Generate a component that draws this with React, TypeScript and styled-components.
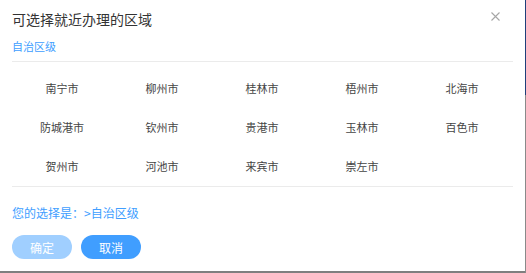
import React from "react";
import styled, { createGlobalStyle } from "styled-components";

const Global = createGlobalStyle`
  html, body { margin: 0; padding: 0; }
  body {
    background: #7f7f7f;
    font-family: "Noto Sans CJK SC", "Noto Sans", sans-serif;
    width: 526px;
    height: 273px;
    overflow: hidden;
  }
`;

const Page = styled.div`
  display: flex;
  width: 526px;
  height: 273px;
`;

const Dialog = styled.div`
  width: 525px;
  height: 271px;
  background: #fff;
  box-sizing: border-box;
  padding: 0 12px;
  display: flex;
  flex-direction: column;
`;

const SideStrip = styled.div`
  width: 1px;
  height: 273px;
  background: linear-gradient(#1f3f7a 0, #1f3f7a 95px, #8a8a8a 95px, #8a8a8a 100%);
`;

const Header = styled.div`
  display: flex;
  align-items: center;
  justify-content: space-between;
  height: 36px;
`;

const Title = styled.div`
  font-size: 14px;
  line-height: 16px;
  color: #333;
  margin-top: 2px;
`;

const Close = styled.button`
  border: 0;
  background: none;
  padding: 0;
  margin-right: 12px;
  margin-bottom: 3px;
  width: 12px;
  height: 12px;
  display: flex;
  align-items: center;
  justify-content: center;
  cursor: pointer;
`;

const Level = styled.div`
  font-size: 11px;
  line-height: 20px;
  height: 20px;
  color: #409eff;
  display: flex;
  align-items: center;
  margin-bottom: 5px;
`;

const Divider = styled.div`
  height: 1px;
  background: #ebebeb;
`;

const Grid = styled.div`
  display: grid;
  grid-template-columns: repeat(5, 100px);
  grid-auto-rows: 39px;
  padding-top: 6px;
  height: 124px;
  box-sizing: border-box;
  width: 500px;
`;

const City = styled.div`
  font-size: 11px;
  color: #444;
  display: flex;
  align-items: center;
  justify-content: center;
  cursor: pointer;
`;

const Selection = styled.div`
  font-size: 12px;
  color: #409eff;
  height: 48px;
  box-sizing: border-box;
  padding-top: 2px;
  display: flex;
  align-items: center;
`;

const Actions = styled.div`
  display: flex;
  gap: 9px;
`;

const Btn = styled.button<{ $light?: boolean }>`
  width: 60px;
  height: 24px;
  border-radius: 12px;
  border: 0;
  padding: 0;
  background: ${(p) => (p.$light ? "#a0cfff" : "#409eff")};
  color: #fff;
  font-family: "Noto Sans CJK SC", sans-serif;
  font-size: 12px;
  cursor: pointer;
`;

const cities = [
  "南宁市", "柳州市", "桂林市", "梧州市", "北海市",
  "防城港市", "钦州市", "贵港市", "玉林市", "百色市",
  "贺州市", "河池市", "来宾市", "崇左市",
];

export default function App() {
  return (
    <>
      <Global />
      <Page>
        <Dialog>
          <Header>
            <Title>可选择就近办理的区域</Title>
            <Close aria-label="close">
              <svg width="9" height="9" viewBox="0 0 9 9">
                <path d="M0.5 0.5 L8.5 8.5 M8.5 0.5 L0.5 8.5" stroke="#a6a6a6" strokeWidth="1.1" />
              </svg>
            </Close>
          </Header>
          <Level>自治区级</Level>
          <Divider />
          <Grid>
            {cities.map((c) => (
              <City key={c}>{c}</City>
            ))}
          </Grid>
          <Divider />
          <Selection>您的选择是：&gt;自治区级</Selection>
          <Actions>
            <Btn $light>确定</Btn>
            <Btn>取消</Btn>
          </Actions>
        </Dialog>
        <SideStrip />
      </Page>
    </>
  );
}
